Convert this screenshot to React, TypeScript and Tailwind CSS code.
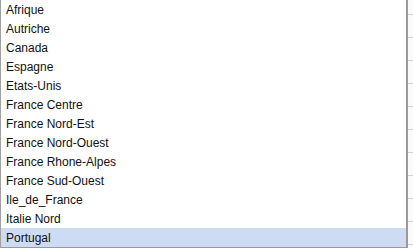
const items = [
  'Afrique',
  'Autriche',
  'Canada',
  'Espagne',
  'Etats-Unis',
  'France Centre',
  'France Nord-Est',
  'France Nord-Ouest',
  'France Rhone-Alpes',
  'France Sud-Ouest',
  'Ile_de_France',
  'Italie Nord',
  'Portugal',
];

export default function App() {
  const selected = 'Portugal';

  return (
    <div className="flex w-[413px] h-[248px] overflow-hidden bg-white font-['Liberation_Sans',Arial,sans-serif]">
      {/* Dropdown list */}
      <div className="flex flex-col w-[408px] h-[248px] border-l border-r-2 border-b border-l-[#a0a0a0] border-r-[#9a9a9a] border-b-[#9a9a9a] bg-white">
        {items.map((item) => (
          <div
            key={item}
            className={`h-[19px] flex items-center pl-[5px] text-[12px] text-[#111] leading-none ${item === selected ? 'bg-[#cddcf3]' : ''}`}
          >
            {item}
          </div>
        ))}
      </div>

      {/* Sheet visible behind */}
      <div className="flex flex-col flex-1 bg-[#fafafa] pt-[14px]">
        {Array.from({ length: 11 }).map((_, i) => (
          <div key={i} className="h-[23px] shrink-0 border-t border-[#cfcfcf]" />
        ))}
      </div>
    </div>
  );
}
